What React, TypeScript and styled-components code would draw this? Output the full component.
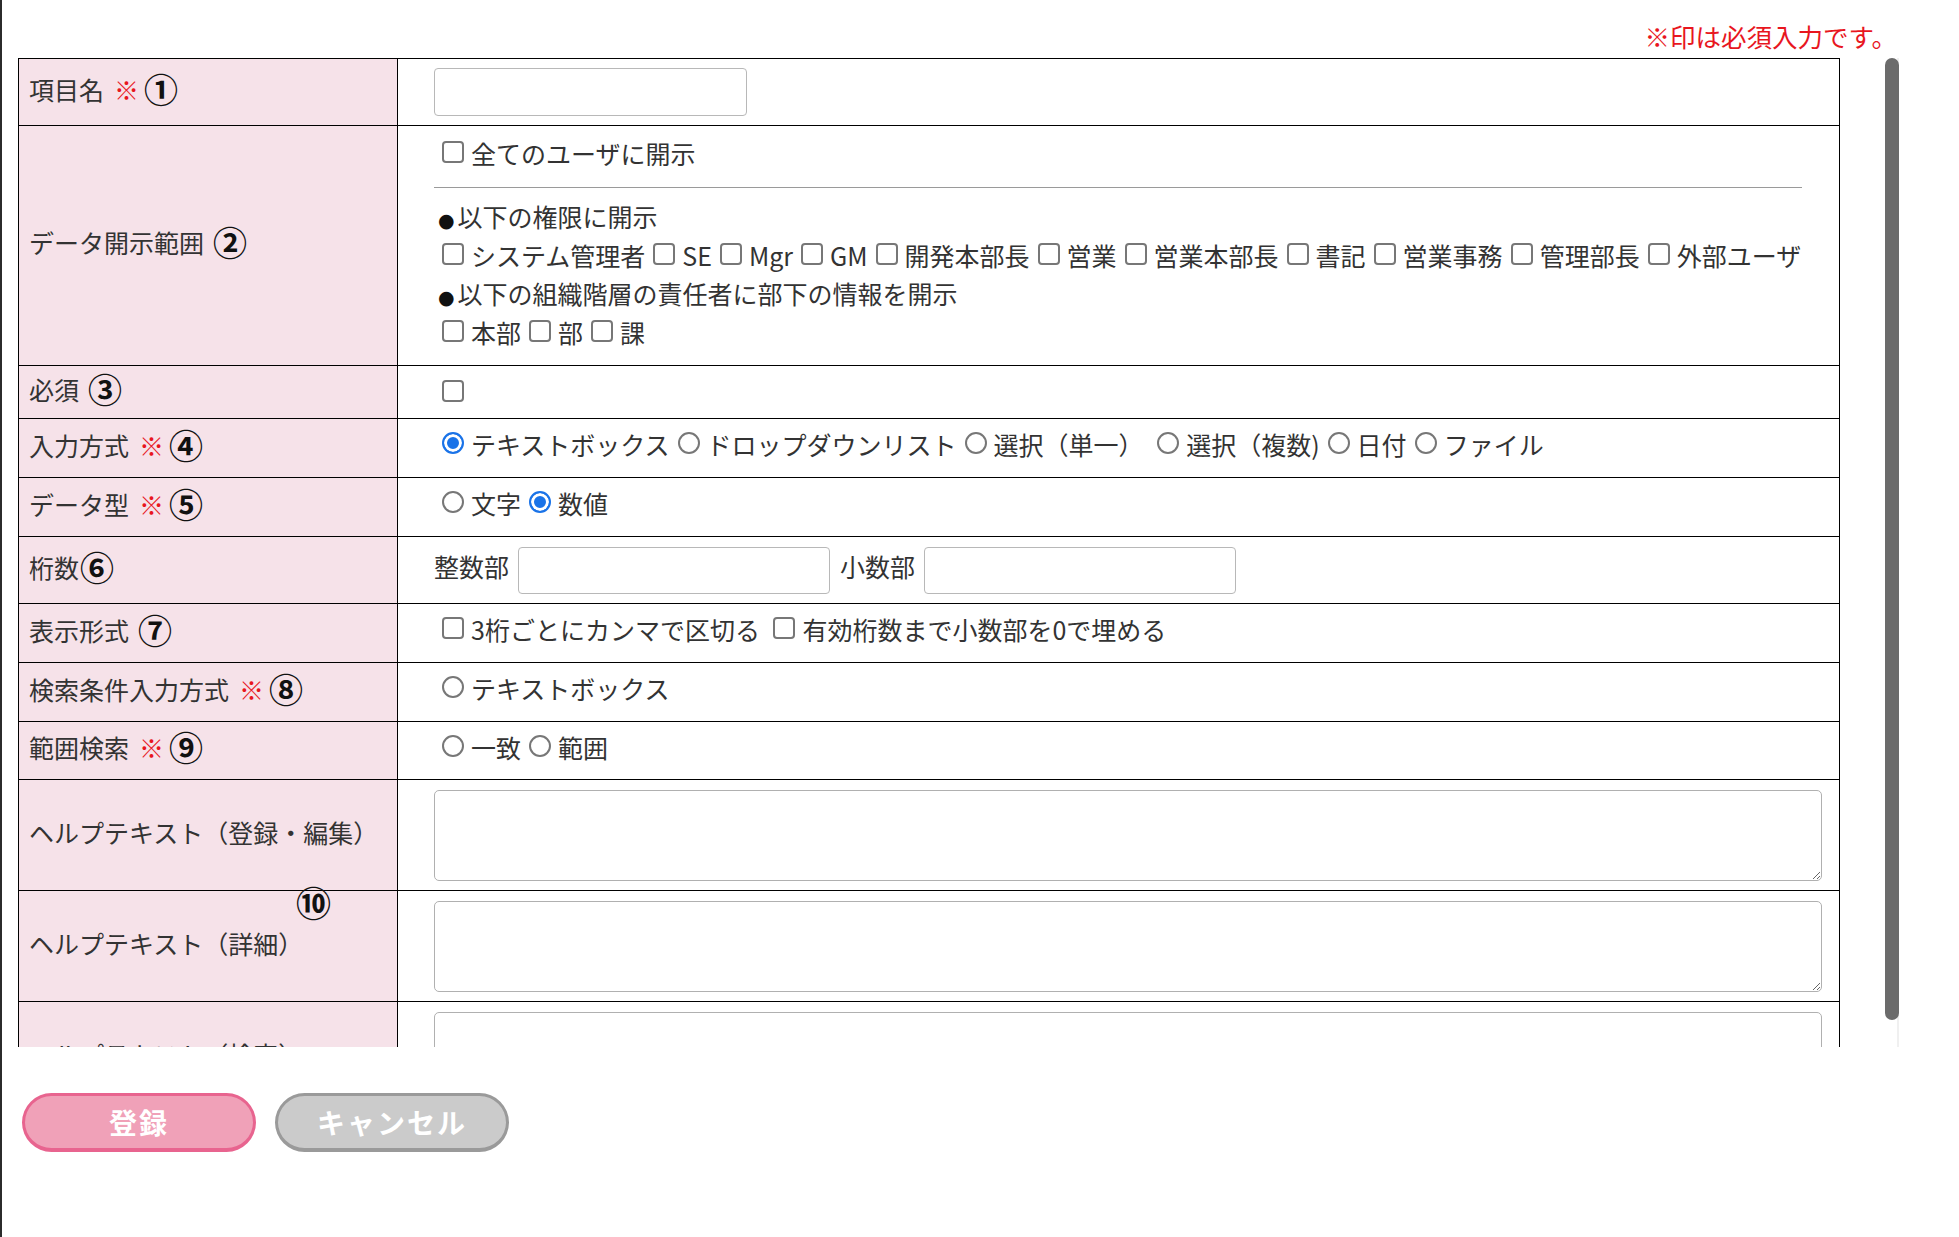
import React from "react";
import styled, { createGlobalStyle } from "styled-components";

const GlobalStyle = createGlobalStyle`
  html, body { margin: 0; padding: 0; background: #fff; }
  body {
    font-family: "Noto Sans CJK JP", "Noto Sans", sans-serif;
    color: #333;
  }
`;

const Page = styled.div`
  min-height: 100vh;
  box-sizing: border-box;
  border-left: 2px solid #2b2b2b;
  padding-left: 16px;
`;

const Frame = styled.div`
  width: 1882px;
`;

const NoteBar = styled.div`
  height: 58px;
  box-sizing: border-box;
  padding: 13px 3px 0 0;
  display: flex;
  justify-content: flex-end;
  align-items: center;
  color: #e8161e;
  font-size: 25.5px;
`;

const Viewport = styled.div`
  display: flex;
  height: 989px;
`;

const ScrollArea = styled.div`
  flex: 1;
  min-width: 0;
  box-sizing: border-box;
  overflow-y: auto;
  padding-right: 44px;
  scrollbar-width: none;
  &::-webkit-scrollbar { display: none; }
`;

const Track = styled.div`
  flex: none;
  width: 16px;
  box-sizing: border-box;
  padding: 0 1px;
  background: linear-gradient(to right, transparent 13px, #f0f0f0 13px, #f0f0f0 15px, transparent 15px);
`;

const Thumb = styled.div`
  height: 962px;
  border-radius: 7px;
  background: #6b6b6b;
`;

const FormTable = styled.table`
  width: 100%;
  border-collapse: collapse;
  table-layout: fixed;
  border: 1px solid #000;
`;

const Row = styled.tr<{ $h: number }>`
  height: ${(p) => p.$h}px;
`;

const LabelCell = styled.th`
  position: relative;
  box-sizing: border-box;
  width: 379px;
  padding: 0 10px 7px;
  border: 1px solid #000;
  background: #f6e2e9;
  text-align: left;
  vertical-align: middle;
  font-weight: 400;
  font-size: 25px;
  line-height: 36px;
  color: #333;
  white-space: nowrap;
`;

const ContentCell = styled.td`
  padding: 8px 17px 8px 36px;
  border: 1px solid #000;
  vertical-align: middle;
  font-size: 25px;
  line-height: 36px;
  color: #333;
  white-space: nowrap;
`;

const ChoiceCell = styled(ContentCell)`
  padding-top: 4px;
  padding-bottom: 12px;
`;

const ScopeCell = styled(ContentCell)`
  padding-top: 7px;
  padding-bottom: 13px;
`;

const Req = styled.span`
  color: #e8161e;
  margin: 0 -4px 0 10px;
`;

const Num = styled.span<{ $space?: boolean }>`
  font-size: 34px;
  font-weight: 700;
  color: #111;
  line-height: 1;
  vertical-align: -3px;
  margin-left: ${(p) => (p.$space ? "9px" : "1px")};
`;

const FloatNum = styled(Num)`
  position: absolute;
  left: 277px;
  top: -7px;
  margin-left: 0;
  font-size: 35px;
  letter-spacing: -2px;
`;

const Line = styled.div`
  height: 38.5px;
  line-height: 38.5px;
  white-space: nowrap;
`;

const Rule = styled.hr`
  margin: 15px 20px 9px 0;
  border: none;
  border-top: 1px solid #9a9a9a;
  height: 0;
`;

const Bullet = styled.span`
  font-family: "DejaVu Sans", sans-serif;
  font-size: 19px;
  line-height: 1;
  color: #111;
  margin: 0 3px 0 4px;
`;

const Box = styled.input`
  appearance: none;
  box-sizing: border-box;
  width: 22px;
  height: 22px;
  margin: 0 7px 0 8px;
  border: 2px solid #777;
  border-radius: 4px;
  background: #fff;
  vertical-align: 1px;
  &[type="radio"] {
    border-radius: 50%;
  }
  &[type="radio"]:checked {
    border-color: #1a73e8;
    background: #1a73e8;
    box-shadow: inset 0 0 0 3px #fff;
  }
`;

const TextInput = styled.input`
  box-sizing: border-box;
  width: 313px;
  height: 48px;
  border: 1px solid #b8b8b8;
  border-radius: 4px;
  vertical-align: middle;
`;

const NumInput = styled.input`
  box-sizing: border-box;
  width: 312px;
  height: 47px;
  margin: 0 10px 0 9px;
  border: 1px solid #b8b8b8;
  border-radius: 4px;
  vertical-align: middle;
`;

const Area = styled.textarea`
  display: block;
  box-sizing: border-box;
  width: 100%;
  height: 91px;
  border: 1px solid #b0b0b0;
  border-radius: 5px;
  resize: vertical;
  font: inherit;
`;

const ButtonBar = styled.div`
  display: flex;
  gap: 19px;
  margin-top: 46px;
  padding-left: 4px;
`;

const Btn = styled.button<{ $kind: "primary" | "cancel" }>`
  width: 234px;
  height: 59px;
  border-radius: 30px;
  border: 3px solid ${(p) => (p.$kind === "primary" ? "#e8648f" : "#9a9a9a")};
  border-bottom-width: 4px;
  background: ${(p) => (p.$kind === "primary" ? "#f0a1b8" : "#cbcbcb")};
  color: #fff;
  font-family: "Noto Sans CJK JP", sans-serif;
  font-weight: 700;
  font-size: 28px;
  letter-spacing: 2px;
  padding: 0;
  cursor: pointer;
`;

type ChoiceProps = {
  type: "checkbox" | "radio";
  name?: string;
  checked?: boolean;
  children?: React.ReactNode;
};

function Choice({ type, name, checked, children }: ChoiceProps) {
  return (
    <label>
      <Box type={type} name={name} defaultChecked={checked} />
      {children}
    </label>
  );
}

const roles = [
  "システム管理者",
  "SE",
  "Mgr",
  "GM",
  "開発本部長",
  "営業",
  "営業本部長",
  "書記",
  "営業事務",
  "管理部長",
  "外部ユーザ",
];

export default function App() {
  return (
    <>
      <GlobalStyle />
      <Page>
        <Frame>
          <NoteBar>※印は必須入力です。</NoteBar>
          <Viewport>
            <ScrollArea>
              <FormTable>
                <tbody>
                  <Row $h={67}>
                    <LabelCell>
                      項目名<Req>※</Req>
                      <Num $space>①</Num>
                    </LabelCell>
                    <ContentCell>
                      <TextInput type="text" />
                    </ContentCell>
                  </Row>
                  <Row $h={240}>
                    <LabelCell>
                      データ開示範囲<Num $space>②</Num>
                    </LabelCell>
                    <ScopeCell>
                      <Line>
                        <Choice type="checkbox">全てのユーザに開示</Choice>
                      </Line>
                      <Rule />
                      <Line>
                        <Bullet>●</Bullet>以下の権限に開示
                      </Line>
                      <Line>
                        {roles.map((r) => (
                          <Choice key={r} type="checkbox">
                            {r}
                          </Choice>
                        ))}
                      </Line>
                      <Line>
                        <Bullet>●</Bullet>以下の組織階層の責任者に部下の情報を開示
                      </Line>
                      <Line>
                        <Choice type="checkbox">本部</Choice>
                        <Choice type="checkbox">部</Choice>
                        <Choice type="checkbox">課</Choice>
                      </Line>
                    </ScopeCell>
                  </Row>
                  <Row $h={53}>
                    <LabelCell>
                      必須<Num $space>③</Num>
                    </LabelCell>
                    <ContentCell>
                      <Choice type="checkbox" />
                    </ContentCell>
                  </Row>
                  <Row $h={59}>
                    <LabelCell>
                      入力方式<Req>※</Req>
                      <Num $space>④</Num>
                    </LabelCell>
                    <ChoiceCell>
                      <Choice type="radio" name="input" checked>
                        テキストボックス
                      </Choice>
                      <Choice type="radio" name="input">
                        ドロップダウンリスト
                      </Choice>
                      <Choice type="radio" name="input">
                        選択（単一）{" "}
                      </Choice>
                      <Choice type="radio" name="input">
                        選択（複数)
                      </Choice>
                      <Choice type="radio" name="input">
                        日付
                      </Choice>
                      <Choice type="radio" name="input">
                        ファイル
                      </Choice>
                    </ChoiceCell>
                  </Row>
                  <Row $h={59}>
                    <LabelCell>
                      データ型<Req>※</Req>
                      <Num $space>⑤</Num>
                    </LabelCell>
                    <ChoiceCell>
                      <Choice type="radio" name="dtype">
                        文字
                      </Choice>
                      <Choice type="radio" name="dtype" checked>
                        数値
                      </Choice>
                    </ChoiceCell>
                  </Row>
                  <Row $h={67}>
                    <LabelCell>
                      桁数<Num>⑥</Num>
                    </LabelCell>
                    <ContentCell>
                      整数部
                      <NumInput type="text" />
                      小数部
                      <NumInput type="text" />
                    </ContentCell>
                  </Row>
                  <Row $h={59}>
                    <LabelCell>
                      表示形式<Num $space>⑦</Num>
                    </LabelCell>
                    <ChoiceCell>
                      <Choice type="checkbox">3桁ごとにカンマで区切る </Choice>
                      <Choice type="checkbox">有効桁数まで小数部を0で埋める</Choice>
                    </ChoiceCell>
                  </Row>
                  <Row $h={59}>
                    <LabelCell>
                      検索条件入力方式<Req>※</Req>
                      <Num $space>⑧</Num>
                    </LabelCell>
                    <ChoiceCell>
                      <Choice type="radio" name="search">
                        テキストボックス
                      </Choice>
                    </ChoiceCell>
                  </Row>
                  <Row $h={58}>
                    <LabelCell>
                      範囲検索<Req>※</Req>
                      <Num $space>⑨</Num>
                    </LabelCell>
                    <ChoiceCell>
                      <Choice type="radio" name="range">
                        一致
                      </Choice>
                      <Choice type="radio" name="range">
                        範囲
                      </Choice>
                    </ChoiceCell>
                  </Row>
                  <Row $h={111}>
                    <LabelCell>ヘルプテキスト（登録・編集）</LabelCell>
                    <ContentCell>
                      <Area />
                    </ContentCell>
                  </Row>
                  <Row $h={111}>
                    <LabelCell>
                      ヘルプテキスト（詳細）
                      <FloatNum>⑩</FloatNum>
                    </LabelCell>
                    <ContentCell>
                      <Area />
                    </ContentCell>
                  </Row>
                  <Row $h={111}>
                    <LabelCell>ヘルプテキスト（検索）</LabelCell>
                    <ContentCell>
                      <Area />
                    </ContentCell>
                  </Row>
                </tbody>
              </FormTable>
            </ScrollArea>
            <Track>
              <Thumb />
            </Track>
          </Viewport>
          <ButtonBar>
            <Btn $kind="primary">登録</Btn>
            <Btn $kind="cancel">キャンセル</Btn>
          </ButtonBar>
        </Frame>
      </Page>
    </>
  );
}
